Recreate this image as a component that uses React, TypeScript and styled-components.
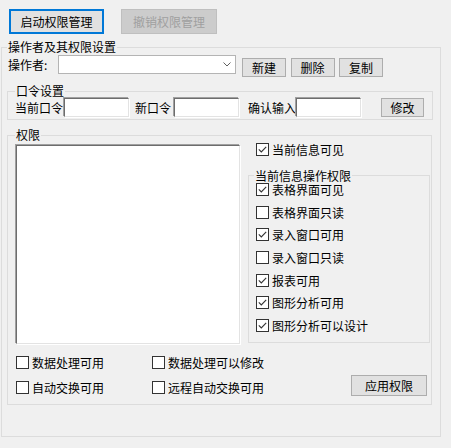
import React from 'react';
import styled, { createGlobalStyle, css } from 'styled-components';

const GlobalStyle = createGlobalStyle`
  html, body {
    margin: 0;
    background: #f0f0f0;
  }
  body {
    font-family: "Noto Sans CJK SC", "Noto Sans", sans-serif;
    font-size: 12px;
    line-height: 14px;
    color: #000;
  }
`;

const Window = styled.div`
  width: 451px;
  height: 448px;
  box-sizing: border-box;
`;

const TopBar = styled.div`
  display: flex;
  gap: 17px;
  padding: 9px 0 0 9px;
  height: 34px;
  box-sizing: border-box;
  margin-bottom: 6px;
`;

const Button = styled.button<{ $w: number; $h: number; $primary?: boolean }>`
  width: ${p => p.$w}px;
  height: ${p => p.$h}px;
  box-sizing: border-box;
  padding: 0;
  margin: 0;
  font-family: inherit;
  font-size: 12px;
  line-height: 14px;
  color: #000;
  background: #e1e1e1;
  border: 1px solid #adadad;
  border-radius: 0;
  ${p =>
    p.$primary &&
    css`
      border: 2px solid #0078d7;
    `}
  &:disabled {
    background: #cccccc;
    border-color: #bfbfbf;
    color: #a0a0a0;
  }
`;

const Group = styled.fieldset<{ $pad: string; $w: number; $mt?: number; $ml?: number }>`
  margin: ${p => p.$mt ?? 0}px 0 0 ${p => p.$ml ?? 0}px;
  padding: ${p => p.$pad};
  width: ${p => p.$w}px;
  min-width: 0;
  box-sizing: border-box;
  border: 1px solid #dcdcdc;
`;

const Caption = styled.legend<{ $shift?: number; $lh?: number }>`
  padding: 0 1px;
  margin-left: ${p => p.$shift ?? 0}px;
  font-size: 12px;
  line-height: ${p => p.$lh ?? 14}px;
`;

const OperatorRow = styled.div`
  display: flex;
  align-items: flex-start;
  padding-top: 1px;
`;

const OpLabel = styled.span`
  width: 51px;
  padding-left: 1px;
  margin-top: 3px;
  box-sizing: border-box;
`;

const Combo = styled.div`
  width: 178px;
  height: 19px;
  box-sizing: border-box;
  background: #fff;
  border: 1px solid #b4b4b4;
  display: flex;
  align-items: center;
  justify-content: flex-end;
  padding-right: 4px;
`;

const ButtonGroup = styled.div`
  display: flex;
  gap: 4.5px;
  margin: 3px 0 0 6px;
`;

const FieldRow = styled.div`
  display: flex;
  align-items: flex-start;
`;

const FieldLabel = styled.span<{ $ml: number; $mr: number }>`
  margin-left: ${p => p.$ml}px;
  margin-right: ${p => p.$mr}px;
  line-height: 19px;
  white-space: nowrap;
`;

const sunken = css`
  box-sizing: border-box;
  background: #fff;
  border: 1px solid;
  border-color: #6d6d6d #e3e3e3 #e3e3e3 #6d6d6d;
  box-shadow: -1px -1px 0 #a0a0a0, 1px 1px 0 #fff;
`;

const TextBox = styled.div`
  ${sunken};
  width: 65px;
  height: 19px;
`;

const ListBox = styled.div`
  ${sunken};
  width: 224px;
  height: 199px;
  margin-top: 3px;
`;

const TopRow = styled.div`
  display: flex;
  align-items: flex-start;
`;

const RightCol = styled.div`
  width: 182px;
  margin-left: 8px;
  display: flex;
  flex-direction: column;
`;

const VisibleRow = styled.div`
  padding: 1px 0 0 8px;
  height: 15px;
  box-sizing: border-box;
`;

const CheckStack = styled.div`
  display: flex;
  flex-direction: column;
  gap: 9.67px;
`;

const CheckRow = styled.label`
  display: flex;
  align-items: center;
  height: 13px;
  line-height: 13px;
  white-space: nowrap;
`;

const Box = styled.span`
  width: 13px;
  height: 13px;
  box-sizing: border-box;
  border: 1px solid #333;
  background: #fff;
  display: flex;
  flex-shrink: 0;
`;

const CheckText = styled.span`
  margin-left: 3px;
`;

const BottomArea = styled.div`
  display: flex;
  margin-top: 11px;
  height: 49px;
`;

const CheckGrid = styled.div`
  display: grid;
  grid-template-columns: 136px auto;
  grid-template-rows: 25px 24px;
  align-items: start;

  & > label {
    margin-top: 1px;
  }
`;

const ApplyButton = styled(Button)`
  margin: 20px 3px 0 auto;
`;

const Check = ({ label, checked = false }: { label: string; checked?: boolean }) => (
  <CheckRow>
    <Box>
      {checked && (
        <svg width="11" height="11" viewBox="0 0 11 11">
          <path d="M1.8 5.4 L4.3 8 L9.2 2.8" fill="none" stroke="#333" strokeWidth="1.1" />
        </svg>
      )}
    </Box>
    <CheckText>{label}</CheckText>
  </CheckRow>
);

const opPerms = [
  { label: '表格界面可见', checked: true },
  { label: '表格界面只读', checked: false },
  { label: '录入窗口可用', checked: true },
  { label: '录入窗口只读', checked: false },
  { label: '报表可用', checked: true },
  { label: '图形分析可用', checked: true },
  { label: '图形分析可以设计', checked: true },
];

const App = () => {
  return (
    <Window>
      <GlobalStyle />
      <TopBar>
        <Button $w={95} $h={25} $primary>
          启动权限管理
        </Button>
        <Button $w={96} $h={25} disabled>
          撤销权限管理
        </Button>
      </TopBar>

      <Group $w={440} $ml={1} $pad="0 7px 31px 5px">
        <Caption>操作者及其权限设置</Caption>
        <OperatorRow>
          <OpLabel>操作者:</OpLabel>
          <Combo>
            <svg width="8" height="5" viewBox="0 0 8 5">
              <path d="M0.5 0.5 L4 4 L7.5 0.5" fill="none" stroke="#606060" strokeWidth="1" />
            </svg>
          </Combo>
          <ButtonGroup>
            <Button $w={44} $h={19}>新建</Button>
            <Button $w={44} $h={19}>删除</Button>
            <Button $w={44} $h={19}>复制</Button>
          </ButtonGroup>
        </OperatorRow>

        <Group $w={426} $mt={7} $pad="0 0 2px 7px">
          <Caption>口令设置</Caption>
          <FieldRow>
            <FieldLabel $ml={0} $mr={1}>当前口令</FieldLabel>
            <TextBox />
            <FieldLabel $ml={6} $mr={3}>新口令</FieldLabel>
            <TextBox />
            <FieldLabel $ml={9} $mr={0}>确认输入</FieldLabel>
            <TextBox />
            <Button $w={43} $h={19} style={{ marginLeft: 20 }}>
              修改
            </Button>
          </FieldRow>
        </Group>

        <Group $w={425} $mt={8} $pad="0 1px 0 8px">
          <Caption $shift={-1}>权限</Caption>
          <TopRow>
            <ListBox />
            <RightCol>
              <VisibleRow>
                <Check label="当前信息可见" checked />
              </VisibleRow>
              <Group $w={182} $mt={12} $pad="1px 0 10px 7px">
                <Caption $shift={-2} $lh={13}>当前信息操作权限</Caption>
                <CheckStack>
                  {opPerms.map(p => (
                    <Check key={p.label} label={p.label} checked={p.checked} />
                  ))}
                </CheckStack>
              </Group>
            </RightCol>
          </TopRow>
          <BottomArea>
            <CheckGrid>
              <Check label="数据处理可用" />
              <Check label="数据处理可以修改" />
              <Check label="自动交换可用" />
              <Check label="远程自动交换可用" />
            </CheckGrid>
            <ApplyButton $w={76} $h={21}>
              应用权限
            </ApplyButton>
          </BottomArea>
        </Group>
      </Group>
    </Window>
  );
};

export default App;
